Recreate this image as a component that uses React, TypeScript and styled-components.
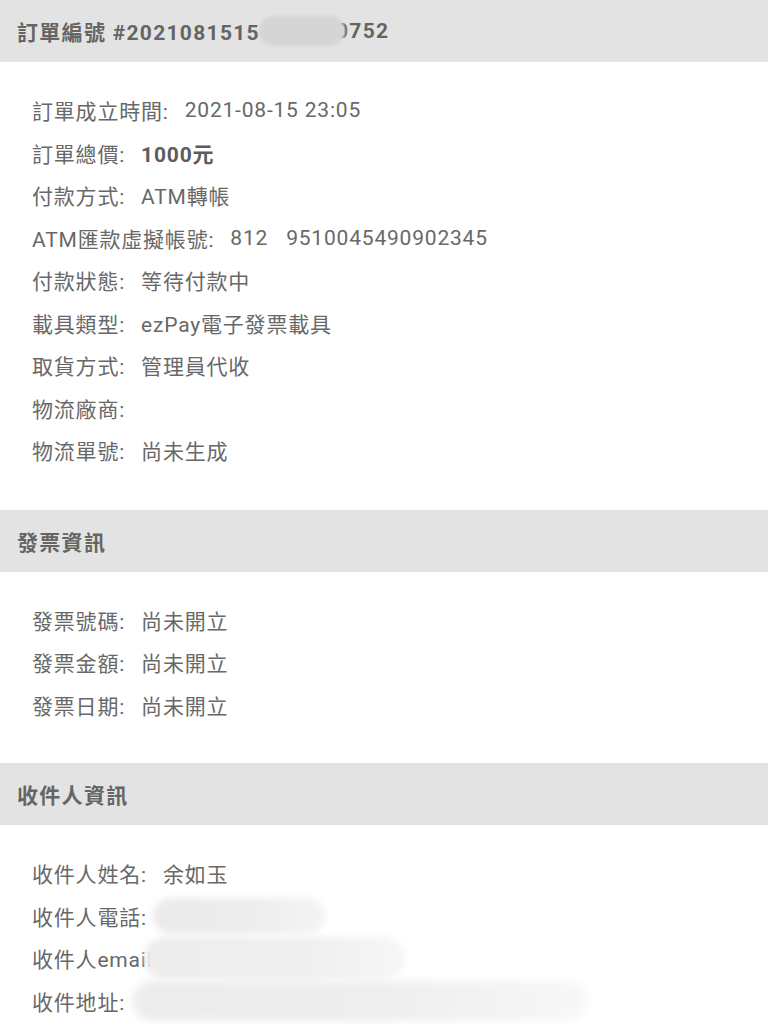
import React from "react";
import styled, { createGlobalStyle } from "styled-components";

const Global = createGlobalStyle`
  html, body { margin: 0; padding: 0; background: #ffffff; }
  body {
    font-family: Roboto, "Noto Sans CJK TC", "Noto Sans", sans-serif;
    -webkit-font-smoothing: antialiased;
  }
`;

const Page = styled.div`
  width: 768px;
  height: 1024px;
  overflow: hidden;
  background: #fff;
`;

const SectionHeader = styled.div`
  height: 62px;
  box-sizing: border-box;
  background: #e3e3e3;
  display: flex;
  align-items: center;
  padding-left: 17px;
  font-size: 21px;
  font-weight: 700;
  color: #656565;
  letter-spacing: 1.3px;
  white-space: nowrap;
`;

const SectionBody = styled.div<{ $bottom: number }>`
  padding: 27px 0 ${(p) => p.$bottom}px 32px;
  display: flex;
  flex-direction: column;
`;

const Row = styled.div`
  height: 42.5px;
  display: flex;
  align-items: center;
  font-size: 21px;
  color: #686868;
  white-space: nowrap;
  letter-spacing: 0.8px;
`;

const Label = styled.span``;

const Value = styled.span<{ $bold?: boolean }>`
  margin-left: 16px;
  font-weight: ${(p) => (p.$bold ? 700 : 400)};
  color: ${(p) => (p.$bold ? "#5c5c5c" : "inherit")};
`;

const Smudge = styled.span<{ $w: number; $h: number; $ml: number; $c: string; $blur: number }>`
  display: inline-block;
  width: ${(p) => p.$w}px;
  height: ${(p) => p.$h}px;
  margin-left: ${(p) => p.$ml}px;
  border-radius: ${(p) => p.$h / 2}px;
  background: ${(p) => p.$c};
  filter: blur(${(p) => p.$blur}px);
  position: relative;
  z-index: 1;
  flex-shrink: 0;
`;

const Tail = styled.span<{ $ml: number }>`
  margin-left: ${(p) => p.$ml}px;
`;

type Item = { label: string; value?: string; bold?: boolean };

const orderItems: Item[] = [
  { label: "訂單成立時間:", value: "2021-08-15 23:05" },
  { label: "訂單總價:", value: "1000元", bold: true },
  { label: "付款方式:", value: "ATM轉帳" },
  { label: "ATM匯款虛擬帳號:", value: "812\u00a0\u00a0\u00a09510045490902345" },
  { label: "付款狀態:", value: "等待付款中" },
  { label: "載具類型:", value: "ezPay電子發票載具" },
  { label: "取貨方式:", value: "管理員代收" },
  { label: "物流廠商:" },
  { label: "物流單號:", value: "尚未生成" },
];

const invoiceItems: Item[] = [
  { label: "發票號碼:", value: "尚未開立" },
  { label: "發票金額:", value: "尚未開立" },
  { label: "發票日期:", value: "尚未開立" },
];

const renderRows = (items: Item[]) =>
  items.map((it) => (
    <Row key={it.label}>
      <Label>{it.label}</Label>
      {it.value && <Value $bold={it.bold}>{it.value}</Value>}
    </Row>
  ));

export default function App() {
  return (
    <Page>
      <Global />
      <SectionHeader>
        訂單編號 #2021081515
        <Smudge $w={86} $h={30} $ml={-1} $c="#d5d5d5" $blur={1.5} />
        <Tail $ml={-9}>0752</Tail>
      </SectionHeader>
      <SectionBody $bottom={38}>{renderRows(orderItems)}</SectionBody>

      <SectionHeader>發票資訊</SectionHeader>
      <SectionBody $bottom={37}>{renderRows(invoiceItems)}</SectionBody>

      <SectionHeader>收件人資訊</SectionHeader>
      <SectionBody $bottom={0}>
        <Row>
          <Label>收件人姓名:</Label>
          <Value>余如玉</Value>
        </Row>
        <Row>
          <Label>收件人電話:</Label>
          <Smudge
            $w={172}
            $h={36}
            $ml={6}
            $c="linear-gradient(90deg, #ebebeb 0%, #ececec 50%, #f4f4f4 100%)"
            $blur={3}
          />
        </Row>
        <Row>
          <Label>收件人email:</Label>
          <Smudge
            $w={262}
            $h={42}
            $ml={-14}
            $c="linear-gradient(90deg, #ededed 0%, #efefef 60%, #f7f7f7 100%)"
            $blur={3}
          />
        </Row>
        <Row>
          <Label>收件地址:</Label>
          <Smudge
            $w={455}
            $h={40}
            $ml={8}
            $c="linear-gradient(90deg, #ececec 0%, #eeeeee 55%, #f8f8f8 100%)"
            $blur={4}
          />
        </Row>
      </SectionBody>
    </Page>
  );
}
